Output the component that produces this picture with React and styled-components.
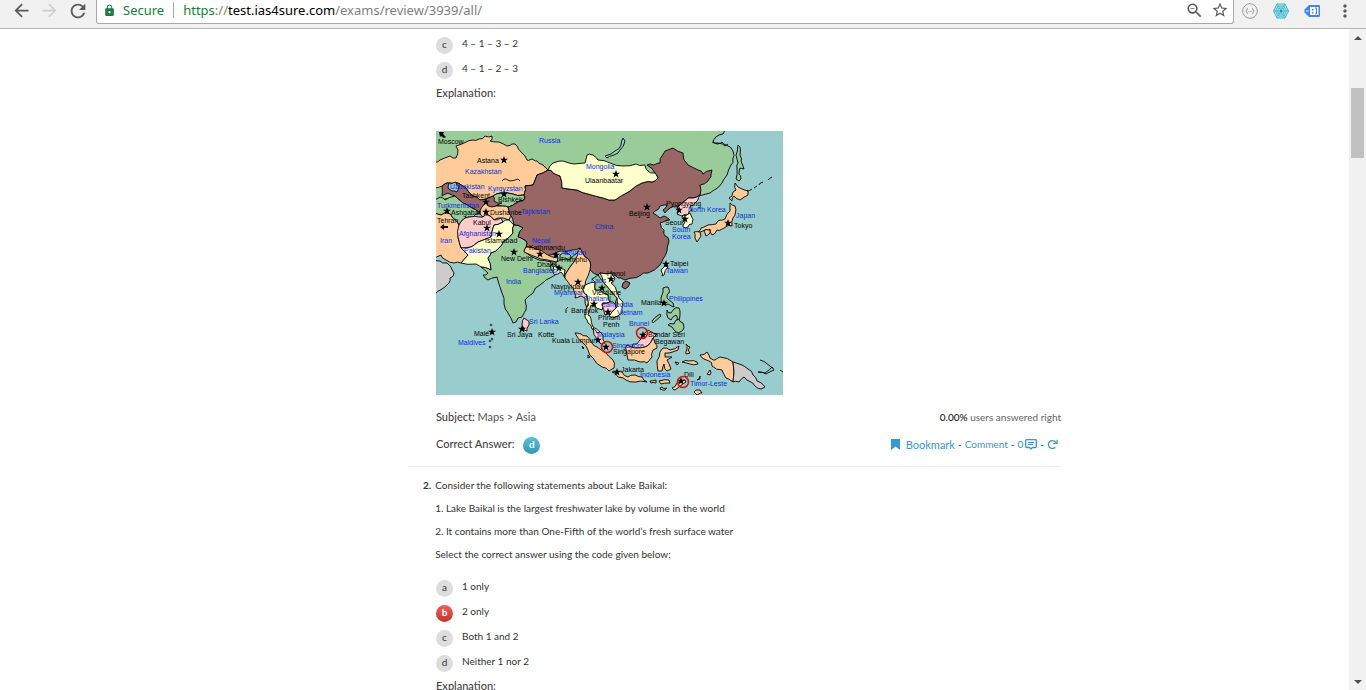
import React from "react";
import styled, { createGlobalStyle } from "styled-components";
import {
  MdArrowBack,
  MdArrowForward,
  MdRefresh,
  MdLock,
  MdZoomOut,
  MdStarBorder,
  MdMoreVert,
} from "react-icons/md";

const SEA = "#99cccc";
const GREEN = "#99cc99";
const ORANGE = "#ffcc99";
const BROWN = "#996666";
const YELLOW = "#ffffcc";
const PINK = "#ffcccc";
const GREY = "#cccccc";

// [fill, outline points], painted in this order
const lands = [
  [GREEN, "-2,-2 289,-2 287,3 283,4 277,10 281,13 286,11 290,14 297,20 297,27 295,34 291,44 286,52 280,58 274,62 262,65 240,62 112,50 -2,70"],
  [GREEN, "302,14 304,16 304,24 305,30 308,38 304,37 303,43 305,48 303,50 300,48 301,38 302,32 300,24"],
  [ORANGE, "-2,31 4,29 14,25 20,27 22,19 20,15 28,12 37,9 43,8 49,5 56,5 54,10 63,11 71,15 76,13 81,15 86,22 91,29 96,28 101,30 107,34 112,39 101,44 97,54 89,55 88,64 77,63 66,62 57,65 44,69 37,65 30,57 22,52 11,52 6,55 -2,57"],
  [BROWN, "6,55 11,52 22,52 30,57 37,65 44,69 57,65 66,72 60,75 51,80 44,82 36,77 27,72 19,65 12,62 6,65"],
  [SEA, "13,52 20,51 23,55 21,61 16,60 12,57"],
  [GREEN, "-2,69 4,66 9,69 19,65 27,72 36,77 44,82 37,86 33,86 29,87 23,94 16,86 11,82 5,84 -2,80"],
  [GREEN, "57,65 66,62 77,63 88,64 88,69 80,72 72,76 66,75 60,75 66,72 58,70"],
  [ORANGE, "46,76 50,72 56,76 66,75 72,76 73,82 77,85 73,89 63,87 58,89 52,84 47,86 44,82"],
  [ORANGE, "-2,82 5,84 11,82 16,86 23,94 24,97 22,106 25,117 32,124 25,132 18,132 10,129 5,124 -2,126"],
  [PINK, "23,94 29,87 33,86 43,86 47,86 52,84 58,89 65,87 67,91 58,94 55,106 42,111 35,116 25,117 22,106"],
  [YELLOW, "25,117 35,116 42,111 55,106 58,94 67,91 73,89 78,94 77,102 67,111 63,117 55,122 52,127 55,139 45,136 40,133 25,132 32,124"],
  [BROWN, "112,39 117,42 124,45 126,57 141,59 152,63 167,67 179,69 194,60 206,52 216,51 222,47 219,42 211,34 218,34 224,32 226,25 229,20 237,17 247,22 248,29 252,34 262,39 267,43 276,39 275,46 272,50 264,54 264,64 257,67 250,69 241,76 234,77 229,82 227,79 231,74 224,75 219,80 217,82 224,87 228,85 234,89 227,91 224,92 228,99 229,105 233,110 231,120 227,128 224,134 212,142 205,144 197,147 189,149 182,147 176,142 164,142 162,144 154,139 154,131 149,126 144,117 136,119 124,120 110,125 100,118 90,116 90,110 82,106 87,97 78,94 73,82 72,76 80,72 88,69 88,64 89,55 97,54 101,44"],
  [YELLOW, "112,39 117,32 127,30 138,33 149,32 151,24 157,24 162,29 174,32 187,35 200,33 209,34 212,40 219,42 222,47 216,51 206,52 194,60 179,69 167,67 152,63 141,59 126,57 124,45 117,42"],
  [SEA, "187,7 189,10 184,19 178,24 171,27 169,25 179,20 185,14"],
  [GREEN, "78,94 87,97 82,106 90,110 90,116 88,120 103,129 116,131 124,129 134,128 142,121 146,124 139,129 134,136 129,144 124,137 116,133 115,139 122,142 119,144 110,149 104,154 97,162 89,169 90,179 86,186 82,187 80,191 77,192 72,182 68,173 66,162 62,150 61,146 52,149 47,144 52,142 45,136 55,139 52,127 55,122 63,117 67,111 77,102"],
  [ORANGE, "90,116 100,118 110,123 122,127 121,131 105,128 88,121"],
  [GREEN, "124,124 130,122 135,125 134,129 124,129"],
  [YELLOW, "116,132 124,137 129,139 129,147 125,141 122,143 117,142"],
  [ORANGE, "142,121 144,117 149,126 154,131 154,139 152,145 149,154 147,159 151,164 153,171 151,177 149,167 145,165 139,167 138,160 134,154 129,147 129,144 134,136 139,129"],
  [YELLOW, "164,142 176,142 179,147 175,152 181,161 187,171 186,182 177,187 173,184 181,176 181,167 174,159 167,151"],
  [GREEN, "162,144 167,151 174,159 181,167 179,174 174,171 172,164 164,159 159,159 159,151 156,148"],
  [YELLOW, "149,154 159,151 159,159 164,159 172,164 174,171 167,172 166,179 159,176 155,174 152,184 155,188 157,196 164,201 161,202 156,198 152,192 149,186 151,176 152,170 151,164 147,159"],
  [PINK, "166,173 174,171 179,173 180,177 174,184 169,184"],
  [PINK, "157,197 161,202 164,201 167,204 169,212 165,213 161,208"],
  [YELLOW, "229,135 232,136 228,144 226,145 225,139"],
  [BROWN, "187,152 190,150 194,152 192,156 189,158 186,156"],
  [PINK, "241,77 250,69 257,67 264,64 262,69 259,72 254,75 256,79 252,84 246,85 241,83 243,80"],
  [YELLOW, "246,85 254,82 257,88 256,93 252,96 247,96 249,91"],
  [ORANGE, "299,52 306,58 312,60 312,64 304,69 298,65 296,70 293,67 297,61 300,59"],
  [ORANGE, "294,72 299,75 299,84 296,90 296,95 291,95 286,98 281,99 276,104 274,98 269,99 262,101 265,97 272,94 280,93 284,89 289,88 294,80"],
  [ORANGE, "258,101 264,101 265,105 261,111 259,107"],
  [ORANGE, "268,100 274,99 274,102 270,105"],
  [PINK, "88,187 91,189 93,194 91,200 88,199 86,194"],
  [GREY, "-2,129 4,130 11,132 15,136 18,142 14,147 13,152 6,158 -2,164"],
  [ORANGE, "139,202 145,203 151,205 156,212 161,216 170,222 177,229 178,237 173,240 166,236 157,227 152,219 147,212"],
  [PINK, "197,213 201,213 206,207 212,199 221,203 217,207 215,211 209,216 199,217 196,216"],
  [ORANGE, "191,214 199,217 209,216 215,211 217,207 219,212 221,217 217,219 216,226 211,232 204,231 192,229 190,219"],
  [ORANGE, "176,241 186,241 192,246 199,244 206,246 211,251 200,251 190,249 182,246"],
  [ORANGE, "224,221 227,217 234,219 243,215 242,219 233,222 229,222 229,226 236,226 231,229 235,238 231,240 228,233 226,240 222,240 221,230"],
  [ORANGE, "214,250 220,249 220,252 215,252"],
  [ORANGE, "223,250 233,249 234,252 225,253"],
  [ORANGE, "225,256 231,257 229,259 224,258"],
  [ORANGE, "236,257 241,252 249,249 250,251 243,256 238,259"],
  [ORANGE, "250,213 254,216 252,219 254,222 250,223 251,218"],
  [ORANGE, "246,231 253,230 261,231 262,233 254,233"],
  [ORANGE, "239,231 243,232 241,234"],
  [ORANGE, "271,243 274,239 274,244"],
  [ORANGE, "261,249 264,245 264,248"],
  [ORANGE, "258,261 264,259 266,262 261,264"],
  [ORANGE, "264,224 271,221 274,227 279,229 284,226 297,231 297,251 290,247 286,239 276,235 273,230 268,228"],
  [GREY, "297,231 306,234 312,238 317,244 321,250 329,256 325,258 319,255 313,250 308,246 303,251 297,251"],
  [SEA, "322,241 329,242 336,236 338,239 330,243"],
  [GREEN, "227,157 232,156 233,162 231,167 237,172 238,176 232,173 227,173 225,167"],
  [GREEN, "231,179 235,182 238,178 243,177 244,184 241,190 240,184 235,189 232,187"],
  [GREEN, "232,194 238,193 243,188 247,192 247,199 242,202 238,199 236,196"],
  [GREEN, "224,183 225,185 217,192 216,190"],
  [ORANGE, "146,215 148,217 147,218"],
  [ORANGE, "152,224 154,226 152,227"],
];

const borders = [
  "311,60 316,58", "318,57 321,55", "323,54 327,51", "332,49 336,46",
  "66,50 68,48 74,50 82,48 84,50",
  "132,176 130,182",
  "324,229 330,232 337,237", "344,239 347,241",
  "276,11 282,12 289,15 292,13",
];

// [text, x, baseline]
const countries = [
  ["Russia", 103, 12], ["Kazakhstan", 29, 43], ["Mongolia", 150, 38],
  ["Uzbekistan", 14, 58], ["Kyrgyzstan", 52, 60], ["Turkmenistan", 1, 77],
  ["Tajikistan", 85, 83], ["Afghanistan", 23, 105], ["Iran", 4, 112],
  ["Pakistan", 28, 122], ["Nepal", 96, 112], ["Bhutan", 128, 124],
  ["Bangladesh", 87, 142], ["India", 70, 153], ["China", 159, 98],
  ["North Korea", 252, 81], ["South", 236, 101], ["Korea", 236, 108],
  ["Japan", 300, 87], ["Taiwan", 230, 142], ["Laos", 155, 152],
  ["Myanmar", 118, 164], ["Thailand", 148, 170], ["Cambodia", 165, 176],
  ["Vietnam", 181, 184], ["Philippines", 233, 170], ["Brunei", 193, 195],
  ["Malaysia", 161, 206], ["Singapore", 176, 217], ["Sri Lanka", 93, 193],
  ["Maldives", 22, 214], ["Indonesia", 204, 246], ["Timor-Leste", 254, 255],
];

const capitals = [
  ["Moscow", 2, 13], ["Astana", 41, 32], ["Ulaanbaatar", 149, 52],
  ["Tashkent", 26, 67], ["Bishkek", 62, 71], ["Ashgabat", 15, 84],
  ["Dushanbe", 54, 84], ["Tehran", 1, 92], ["Kabul", 37, 94],
  ["Islamabad", 49, 112], ["New Delhi", 65, 130], ["Kathmandu", 93, 119],
  ["Thimphu", 124, 131], ["Dhaka", 101, 136], ["Beijing", 193, 85],
  ["Pyongyang", 230, 75], ["Seoul", 229, 94], ["Tokyo", 298, 97],
  ["Taipei", 234, 135], ["Hanoi", 171, 145], ["Naypyidaw", 115, 158],
  ["Vientiane", 156, 164], ["Bangkok", 135, 182], ["Phnom", 162, 189],
  ["Penh", 167, 196], ["Manila", 205, 174], ["Bandar Seri", 212, 206],
  ["Begawan", 219, 213], ["Kuala Lumpur", 116, 212], ["Singapore", 177, 223],
  ["Sri Jaya", 71, 206], ["Kotte", 102, 206], ["Malé", 38, 205],
  ["Jakarta", 185, 241], ["Dili", 248, 246],
];

const stars = [
  [68, 29], [50, 71], [68, 63], [11, 80], [50, 81], [51, 97], [63, 103],
  [78, 121], [104, 123], [120, 124], [123, 137], [180, 43], [211, 76],
  [243, 79], [249, 88], [292, 92], [230, 133], [175, 148], [142, 151],
  [166, 157], [158, 173], [172, 181], [228, 172], [207, 204], [162, 209],
  [170, 216], [181, 241], [245, 250], [56, 201], [86, 198],
];

const circles = [[206, 202], [171, 216], [247, 251]];

const STAR =
  "M0,-4 L1,-1.2 L4,-1.2 L1.6,0.6 L2.5,3.5 L0,1.8 L-2.5,3.5 L-1.6,0.6 L-4,-1.2 L-1,-1.2 Z";

// Breaks every edge in two at a shifted midpoint, so that coasts look ragged.
// The shift depends on the midpoint only: neighbours keep a common border.
const ragged = (points, closed) => {
  const list = points.split(" ").map((p) => p.split(",").map(Number));
  const out = [];
  list.forEach(([x, y], i) => {
    out.push(`${x},${y}`);
    if (i === list.length - 1 && !closed) return;
    const [nx, ny] = list[(i + 1) % list.length];
    if (Math.hypot(nx - x, ny - y) < 5) return;
    const mx = (x + nx) / 2;
    const my = (y + ny) / 2;
    const dx = Math.sin(mx * 12.9 + my * 78.2);
    const dy = Math.sin(mx * 39.3 + my * 11.1);
    out.push(`${(mx + dx).toFixed(1)},${(my + dy).toFixed(1)}`);
  });
  return out.join(" ");
};

const AsiaMap = () => (
  <MapSvg viewBox="0 0 347 264" role="img" aria-label="Map of Asia">
    <rect width="347" height="264" fill={SEA} />
    <g stroke="#000" strokeWidth="0.9">
      {lands.map(([fill, points]) => (
        <polygon key={points} fill={fill} points={ragged(points, true)} />
      ))}
      {borders.map((points) => (
        <polyline key={points} fill="none" points={ragged(points, false)} />
      ))}
    </g>
    {[[55, 194], [56, 208], [54, 210], [54, 216]].map(([x, y]) => (
      <circle key={y} cx={x} cy={y} r="1.3" fill="#335566" />
    ))}
    {stars.map(([x, y]) => (
      <path key={`${x}-${y}`} d={STAR} transform={`translate(${x} ${y})`} />
    ))}
    <path d="M3,1 L8,1 L7,3 L10,6 L8,7 L5,5 L4,6 Z" />
    <path d="M4,96 L8,93 L8,95 L12,95 L12,97 L8,97 L8,99 Z" />
    {capitals.map(([text, x, y]) => (
      <MapText key={text} x={x} y={y}>
        {text}
      </MapText>
    ))}
    {countries.map(([text, x, y]) => (
      <MapText key={text} $country x={x} y={y}>
        {text}
      </MapText>
    ))}
    {circles.map(([x, y]) => (
      <circle key={x} cx={x} cy={y} r="5.5" fill="none" stroke="#dd1111" strokeWidth="1.6" />
    ))}
  </MapSvg>
);

const BracesIcon = () => (
  <svg width="16" height="16" viewBox="0 0 16 16" fill="none" stroke="#9a9a9a">
    <circle cx="8" cy="8" r="7.3" />
    <path d="M6,5.5 Q4.8,5.5 4.8,7 Q4.8,8 3.8,8 Q4.8,8 4.8,9 Q4.8,10.5 6,10.5 M10,5.5 Q11.2,5.5 11.2,7 Q11.2,8 12.2,8 Q11.2,8 11.2,9 Q11.2,10.5 10,10.5" />
    <path d="M6.5,8.5 H9.5" strokeDasharray="1 1" />
  </svg>
);

const WebIcon = () => (
  <svg width="16" height="16" viewBox="0 0 16 16" fill="none" stroke="#35b3c8">
    <path d="M4,1 H12 L15.5,8 L12,15 H4 L0.5,8 Z" fill="#c4ebf1" />
    <path d="M5,3 H11 L13.5,8 L11,13 H5 L2.5,8 Z" />
    <path d="M6,5 H10 L11.5,8 L10,11 H6 L4.5,8 Z" />
    <path d="M4,1 L12,15 M12,1 L4,15 M0.5,8 H15.5" strokeWidth="0.7" />
    <circle cx="8" cy="8" r="1.5" fill="#1795ab" stroke="none" />
  </svg>
);

const TagIcon = () => (
  <svg width="16" height="14" viewBox="0 0 16 14">
    <path d="M5,1 H15 Q16,1 16,2 V12 Q16,13 15,13 H5 L0.5,8.5 V5.5 Z" fill="#4285f4" />
    <rect x="6" y="3" width="8.5" height="8" fill="#fff" />
    <path d="M8,5 h1.5 v1.5 h-1.5z M8,8 h1.5 v1.5 h-1.5z" fill="#4285f4" />
    <path d="M11,4 h1.5 v6 h-1.5" fill="none" stroke="#4285f4" />
    <path d="M2,7 H4.5" stroke="#fff" />
  </svg>
);

const BookmarkIcon = () => (
  <svg width="9" height="11" viewBox="0 0 9 11">
    <path d="M0,0 H9 V11 L4.5,7.5 L0,11 Z" fill="#3498db" />
  </svg>
);

const CommentIcon = () => (
  <svg width="12" height="11" viewBox="0 0 12 11" fill="none" stroke="#3498db">
    <path d="M1.5,0.7 H10.5 Q11.3,0.7 11.3,1.5 V7.7 Q11.3,8.5 10.5,8.5 H7.5 L6,10 L4.5,8.5 H1.5 Q0.7,8.5 0.7,7.7 V1.5 Q0.7,0.7 1.5,0.7 Z" strokeWidth="1.3" />
    <path d="M3,3.5 H9 M3,5.5 H8" />
  </svg>
);

const ReloadIcon = () => (
  <svg width="11" height="11" viewBox="0 0 11 11" fill="none" stroke="#3498db">
    <path d="M8.3,8.3 A4,4 0 1 1 8.5,3 L9.8,4.3" strokeWidth="1.3" />
    <path d="M10,0.8 V4.5 H6.3" strokeWidth="1.2" />
  </svg>
);

const Options = ({ items, wrong }) => (
  <OptionList>
    {items.map(([letter, text]) => (
      <Option key={letter}>
        <Badge $tone={letter === wrong ? "wrong" : "plain"}>{letter}</Badge>
        <OptionText>{text}</OptionText>
      </Option>
    ))}
  </OptionList>
);

export default function App() {
  return (
    <Window>
      <GlobalStyle />
      <Toolbar>
        <NavButtons>
          <IconButton aria-label="Back">
            <MdArrowBack size={21} />
          </IconButton>
          <IconButton aria-label="Forward" disabled>
            <MdArrowForward size={21} />
          </IconButton>
          <IconButton aria-label="Reload">
            <MdRefresh size={22} />
          </IconButton>
        </NavButtons>
        <AddressBar>
          <MdLock size={13} color="#188038" />
          <Secure>Secure</Secure>
          <Url>
            <Scheme>https</Scheme>://<Host>test.ias4sure.com</Host>
            /exams/review/3939/all/
          </Url>
          <IconButton aria-label="Zoom">
            <MdZoomOut size={19} />
          </IconButton>
          <IconButton aria-label="Bookmark this page">
            <MdStarBorder size={18} />
          </IconButton>
        </AddressBar>
        <Extensions>
          <IconButton aria-label="JSON viewer">
            <BracesIcon />
          </IconButton>
          <IconButton aria-label="Web tools">
            <WebIcon />
          </IconButton>
          <IconButton aria-label="Tag assistant">
            <TagIcon />
          </IconButton>
          <IconButton aria-label="Menu">
            <MdMoreVert size={20} />
          </IconButton>
        </Extensions>
      </Toolbar>

      <Viewport>
        <Page>
          <Review>
            <Answer>
              <Options items={[["c", "4 – 1 – 3 – 2"], ["d", "4 – 1 – 2 – 3"]]} />
              <Heading>Explanation:</Heading>
              <AsiaMap />
              <Row>
                <Meta>
                  <strong>Subject:</strong> Maps &gt; Asia
                </Meta>
                <Stats>
                  <strong>0.00%</strong> users answered right
                </Stats>
              </Row>
              <Row>
                <AnswerKey>
                  <strong>Correct Answer:</strong>
                  <Badge $tone="right">d</Badge>
                </AnswerKey>
                <Actions>
                  <BookmarkLink href="#bookmark">
                    <BookmarkIcon />
                    Bookmark
                  </BookmarkLink>
                  <span>-</span>
                  <ActionLink href="#comment">Comment</ActionLink>
                  <span>-</span>
                  <ActionLink href="#comments">
                    0<CommentIcon />
                  </ActionLink>
                  <span>-</span>
                  <ActionLink href="#reload" aria-label="Reload question">
                    <ReloadIcon />
                  </ActionLink>
                </Actions>
              </Row>
            </Answer>
            <Divider />
            <Question>
              <QuestionNumber>2.</QuestionNumber>
              <div>
                <Paragraph>Consider the following statements about Lake Baikal:</Paragraph>
                <Paragraph>1. Lake Baikal is the largest freshwater lake by volume in the world</Paragraph>
                <Paragraph>2. It contains more than One-Fifth of the world’s fresh surface water</Paragraph>
                <Paragraph>Select the correct answer using the code given below:</Paragraph>
              </div>
            </Question>
            <Answer>
              <Options
                wrong="b"
                items={[
                  ["a", "1 only"],
                  ["b", "2 only"],
                  ["c", "Both 1 and 2"],
                  ["d", "Neither 1 nor 2"],
                ]}
              />
              <Heading>Explanation:</Heading>
            </Answer>
          </Review>
        </Page>
        <Scrollbar>
          <ScrollArrow viewBox="0 0 8 4">
            <path d="M0,4 L4,0 L8,4 Z" fill="#505050" />
          </ScrollArrow>
          <Thumb />
          <ScrollArrow viewBox="0 0 8 4">
            <path d="M0,0 L4,4 L8,0 Z" fill="#505050" />
          </ScrollArrow>
        </Scrollbar>
      </Viewport>
    </Window>
  );
}

const GlobalStyle = createGlobalStyle`
  * {
    box-sizing: border-box;
  }

  body {
    margin: 0;
    background: #fff;
    color: #333;
    font-family: Lato, "Liberation Sans", sans-serif;
    font-size: 10px;
  }
`;

const Window = styled.div`
  display: flex;
  flex-direction: column;
  height: 100vh;
  overflow: hidden;
`;

const Toolbar = styled.header`
  display: flex;
  flex: none;
  height: 29px;
  background: #f1f1f1;
  border-bottom: 1px solid #b4b4b4;
`;

const NavButtons = styled.nav`
  display: flex;
  align-items: center;
  justify-content: space-between;
  width: 96px;
  height: 21px;
  padding: 0 7px 0 11px;
`;

const IconButton = styled.button`
  display: flex;
  padding: 0;
  border: none;
  background: none;
  color: #5a5a5a;

  &:disabled {
    color: #d0d0d0;
  }
`;

const AddressBar = styled.div`
  display: flex;
  flex: 1;
  align-items: center;
  gap: 7px;
  height: 24px;
  padding: 0 4px 3px 6px;
  background: #fff;
  border: 1px solid #a8a8a8;
  border-top: none;
  border-radius: 0 0 3px 3px;
  font-family: "Noto Sans", "Open Sans", sans-serif;
  font-size: 13px;
  line-height: 20px;
`;

const Secure = styled.span`
  margin-right: 2px;
  padding-right: 9px;
  border-right: 1px solid #aaa;
  color: #188038;
  line-height: 16px;
`;

const Url = styled.span`
  flex: 1;
  color: #808080;
`;

const Scheme = styled.span`
  color: #188038;
`;

const Host = styled.span`
  color: #000;
`;

const Extensions = styled.div`
  display: flex;
  align-items: center;
  justify-content: space-between;
  width: 132px;
  height: 21px;
  padding: 0 11px 0 8px;
`;

const Viewport = styled.div`
  display: flex;
  flex: 1;
  min-height: 0;
`;

const Page = styled.main`
  display: grid;
  flex: 1;
  grid-template-columns: 408fr 653fr 288fr;
  overflow: hidden;
`;

const Review = styled.section`
  grid-column: 2;
  min-width: 0;
  padding-top: 4px;
`;

const Answer = styled.div`
  padding-left: 28px;
`;

const OptionList = styled.ul`
  margin: 0;
  padding: 0;
  list-style: none;
`;

const Option = styled.li`
  display: flex;
  gap: 9px;
  padding: 4px 0;
`;

const tones = {
  plain: "background: #ddd; color: #333;",
  wrong: "background: linear-gradient(#ee5f5b, #bd362f); color: #fff;",
  right: "background: linear-gradient(#5bc0de, #2f96b4); color: #fff;",
};

const Badge = styled.span`
  flex: none;
  width: 17px;
  height: 17px;
  border-radius: 50%;
  font-size: 10px;
  font-weight: ${({ $tone }) => ($tone === "plain" ? 400 : 700)};
  line-height: 14px;
  text-align: center;
  ${({ $tone }) => tones[$tone]}
`;

const OptionText = styled.span`
  line-height: 12px;
`;

const Heading = styled.h2`
  margin: 0;
  color: #444;
  font-size: 11px;
  font-weight: 500;
  line-height: 20px;
`;

const MapSvg = styled.svg`
  display: block;
  width: 347px;
  max-width: 100%;
  margin: 28px 0 12px;
`;

const MapText = styled.text`
  fill: ${({ $country }) => ($country ? "#0a2fdc" : "#000")};
  font-family: "Liberation Sans", Arial, sans-serif;
  font-size: 7px;
`;

const Row = styled.div`
  display: flex;
  align-items: center;
  justify-content: space-between;
  height: 20px;
  margin-bottom: 7px;

  &:last-child {
    margin-bottom: 12px;
  }
`;

const Meta = styled.div`
  color: #555;
  font-size: 11px;
  line-height: 20px;

  strong {
    color: #444;
    font-weight: 500;
  }
`;

const AnswerKey = styled(Meta)`
  display: flex;
  align-items: flex-end;
  gap: 9px;
`;

const Stats = styled.div`
  color: #666;

  strong {
    color: #222;
    font-weight: 500;
  }
`;

const Actions = styled.div`
  display: flex;
  align-items: center;
  gap: 3px;
  padding-right: 3px;
`;

const ActionLink = styled.a`
  display: flex;
  align-items: center;
  gap: 2px;
  color: #3498db;
  text-decoration: none;
`;

const BookmarkLink = styled(ActionLink)`
  gap: 6px;
  font-size: 11px;
`;

const Divider = styled.hr`
  height: 1px;
  margin: 0;
  border: none;
  background: #eee;
`;

const Question = styled.div`
  display: flex;
  gap: 4px;
  padding: 7px 0 10px 15px;
`;

const QuestionNumber = styled.strong`
  line-height: 23px;
`;

const Paragraph = styled.p`
  margin: 0;
  line-height: 23px;
`;

const Scrollbar = styled.div`
  display: flex;
  flex: none;
  flex-direction: column;
  align-items: center;
  width: 17px;
  padding: 7px 0 6px;
  background: #f1f1f1;
`;

const ScrollArrow = styled.svg`
  flex: none;
  width: 8px;
  height: 4px;

  &:last-child {
    margin-top: auto;
  }
`;

const Thumb = styled.div`
  width: 13px;
  height: 70px;
  margin-top: 48px;
  background: #c1c1c1;
`;
